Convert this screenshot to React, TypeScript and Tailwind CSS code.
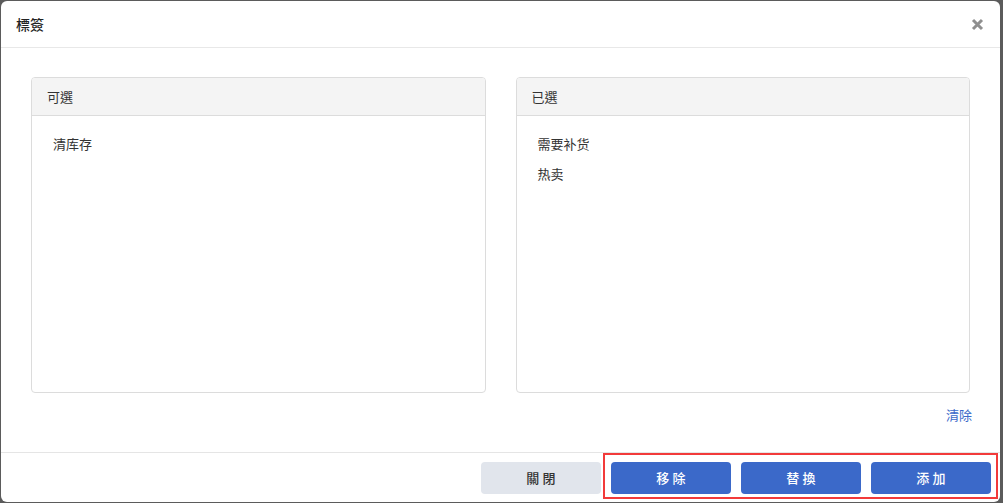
import React from "react";

const font = { fontFamily: '"Noto Sans CJK TC", "Noto Sans CJK SC", "Noto Sans", sans-serif' };

function Panel({ title, items }: { title: string; items: string[] }) {
  return (
    <div className="flex h-[316px] w-[455px] flex-col overflow-hidden rounded-[4px] border border-[#dcdcdc]">
      <div className="flex h-[38px] items-center border-b border-[#dcdcdc] bg-[#f4f4f4] px-[15px] text-[13px] text-[#333]">
        {title}
      </div>
      <div className="flex flex-col gap-[10px] px-[21px] pt-[18px] text-[13px] text-[#333]">
        {items.map((it) => (
          <div key={it} className="h-[20px] leading-[20px]">{it}</div>
        ))}
      </div>
    </div>
  );
}

export default function App() {
  return (
    <div className="h-[503px] w-[1003px] overflow-hidden bg-[#5b5b5b] pl-[1px] pt-[1px]" style={font}>
      <div className="relative h-[501px] w-[999px] rounded-[6px] bg-white">
        <div className="flex h-[47px] items-center justify-between border-b border-[#e8e8e8] pl-[15px] pr-[16px]">
          <div className="text-[14px] font-medium text-[#222]">標簽</div>
          <svg width="13" height="13" viewBox="0 0 13 13">
            <path d="M2 2 L11 11 M11 2 L2 11" stroke="#8f8f8f" strokeWidth="3" strokeLinecap="butt" />
          </svg>
        </div>
        <div className="flex gap-[30px] px-[30px] pt-[29px]">
          <Panel title="可選" items={["清库存"]} />
          <Panel title="已選" items={["需要补货", "热卖"]} />
        </div>
        <div className="flex h-[59px] items-start justify-end pr-[28px] pt-[12px]">
          <span className="text-[13px] leading-[20px] text-[#3b69c9]">清除</span>
        </div>
        <div className="flex h-[49px] items-start justify-end gap-[10px] border-t border-[#e5e5e5] pr-[9px] pt-[9px]">
          <button className="h-[32px] w-[120px] rounded-[4px] bg-[#e1e5ec] pl-[0.25em] text-[13px] font-medium tracking-[0.25em] text-[#333]">關閉</button>
          <button className="h-[32px] w-[120px] rounded-[4px] bg-[#3b69c9] pl-[0.25em] text-[13px] font-medium tracking-[0.25em] text-white">移除</button>
          <button className="h-[32px] w-[120px] rounded-[4px] bg-[#3b69c9] pl-[0.25em] text-[13px] font-medium tracking-[0.25em] text-white">替換</button>
          <button className="h-[32px] w-[120px] rounded-[4px] bg-[#3b69c9] pl-[0.25em] text-[13px] font-medium tracking-[0.25em] text-white">添加</button>
        </div>
        <div className="pointer-events-none absolute left-[602px] top-[452px] h-[46px] w-[395px] border-2 border-[#f23a3a]"></div>
      </div>
    </div>
  );
}
